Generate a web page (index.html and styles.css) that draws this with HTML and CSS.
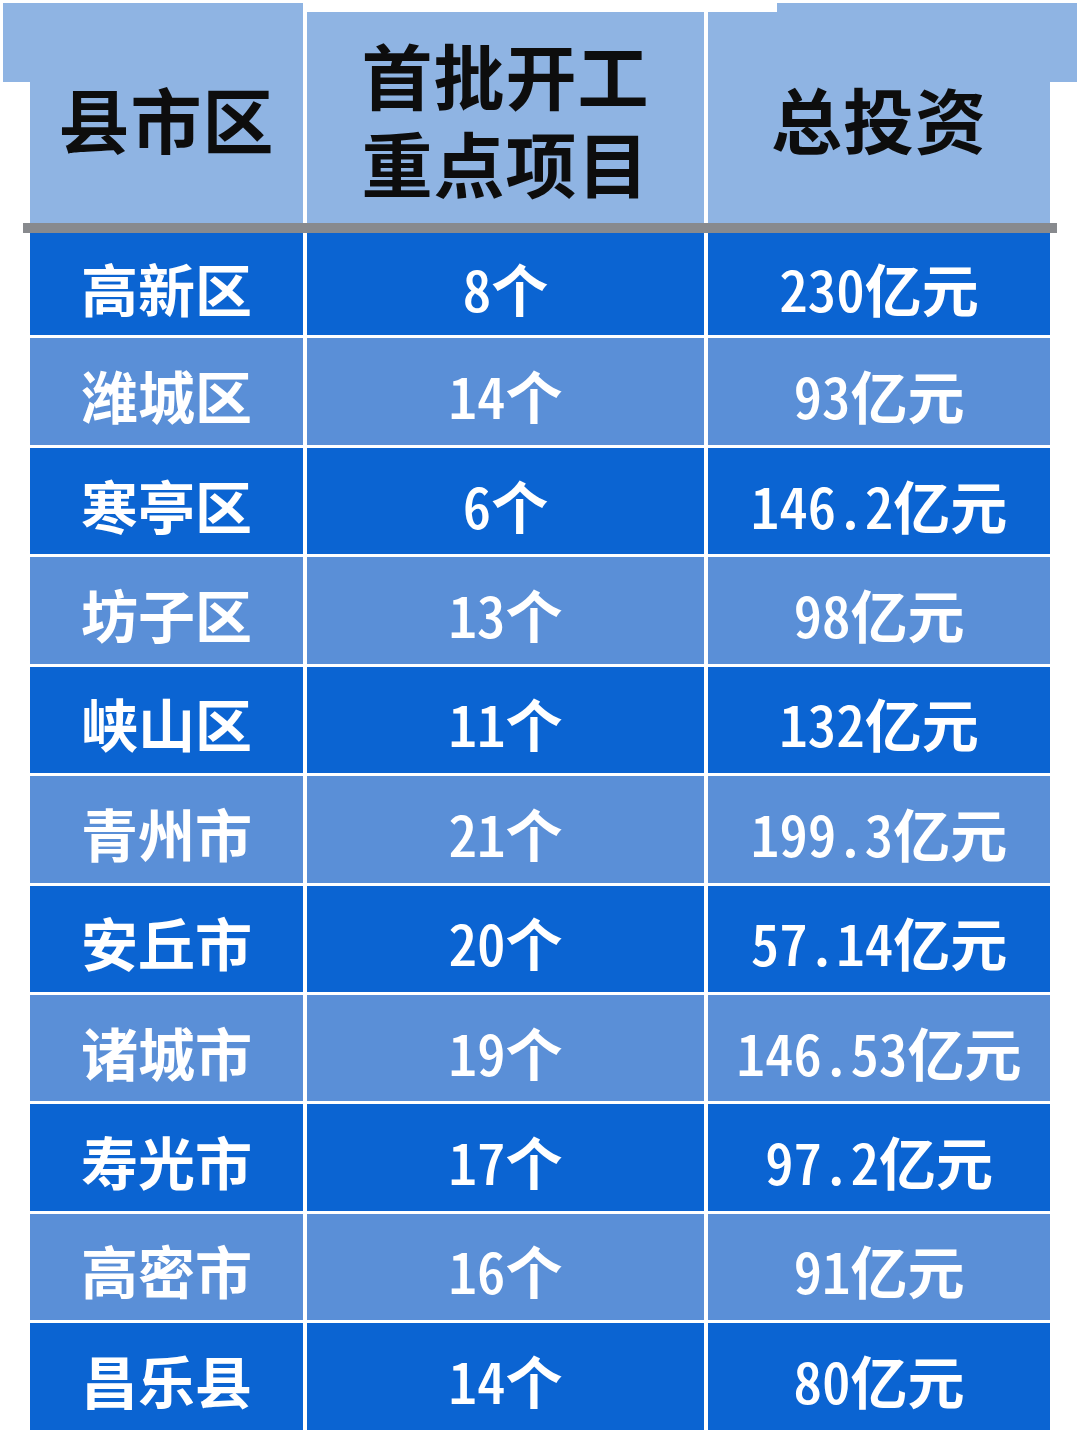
FILE: index.html
```html
<!DOCTYPE html>
<html lang="zh-CN">
<head>
<meta charset="utf-8">
<title>首批开工重点项目</title>
<link rel="stylesheet" href="styles.css">
</head>
<body>
<div class="page">
  <div class="tab tab-left"></div>
  <div class="tab tab-right"></div>
  <div class="head">
    <div class="hcell">县市区</div>
    <div class="hcell two"><span class="hl">首批开工</span><span class="hl">重点项目</span></div>
    <div class="hcell">总投资</div>
  </div>
  <div class="rule"></div>
  <div class="body">
    <div class="c d">高新区</div><div class="c d"><span class="n">8</span>个</div><div class="c d"><span class="n">230</span>亿元</div>
    <div class="c l">潍城区</div><div class="c l"><span class="n">14</span>个</div><div class="c l"><span class="n">93</span>亿元</div>
    <div class="c d">寒亭区</div><div class="c d"><span class="n">6</span>个</div><div class="c d"><span class="n">146.2</span>亿元</div>
    <div class="c l">坊子区</div><div class="c l"><span class="n">13</span>个</div><div class="c l"><span class="n">98</span>亿元</div>
    <div class="c d">峡山区</div><div class="c d"><span class="n">11</span>个</div><div class="c d"><span class="n">132</span>亿元</div>
    <div class="c l">青州市</div><div class="c l"><span class="n">21</span>个</div><div class="c l"><span class="n">199.3</span>亿元</div>
    <div class="c d">安丘市</div><div class="c d"><span class="n">20</span>个</div><div class="c d"><span class="n">57.14</span>亿元</div>
    <div class="c l">诸城市</div><div class="c l"><span class="n">19</span>个</div><div class="c l"><span class="n">146.53</span>亿元</div>
    <div class="c d">寿光市</div><div class="c d"><span class="n">17</span>个</div><div class="c d"><span class="n">97.2</span>亿元</div>
    <div class="c l">高密市</div><div class="c l"><span class="n">16</span>个</div><div class="c l"><span class="n">91</span>亿元</div>
    <div class="c d">昌乐县</div><div class="c d"><span class="n">14</span>个</div><div class="c d"><span class="n">80</span>亿元</div>
  </div>
</div>
</body>
</html>
```
FILE: styles.css
```css
* { box-sizing: border-box; }
html, body { margin: 0; padding: 0; background: #ffffff; }
body {
  width: 1080px;
  height: 1441px;
  overflow: hidden;
  font-family: "Noto Sans CJK SC", "Noto Sans", sans-serif;
}
.page {
  position: relative;
  width: 1080px;
  padding: 12px 30px 0 30px;
}
.tab {
  position: absolute;
  top: 3px;
  height: 79px;
  background: #8fb4e3;
  z-index: 0;
}
.tab-left { left: 3px; width: 300px; }
.tab-right { left: 777px; width: 300px; }
.head {
  position: relative;
  z-index: 1;
  display: grid;
  grid-template-columns: 273px 397px 342px;
  column-gap: 4px;
  height: 211px;
}
.hcell {
  background: #8fb4e3;
  color: #0d0d0d;
  font-weight: 700;
  font-size: 71px;
  line-height: 1;
  letter-spacing: 1px;
  display: flex;
  flex-direction: column;
  align-items: center;
  justify-content: center;
  text-align: center;
  padding-top: 0;
}
.hcell.two {
  gap: 17px;
  padding-top: 0;
}
.hl { display: block; }
.rule {
  height: 10px;
  margin: 0 -7px;
  background: #888a8e;
}
.body {
  display: grid;
  grid-template-columns: 273px 397px 342px;
  grid-template-rows: 102px 107px repeat(9, 106.4px);
  column-gap: 4px;
  row-gap: 3px;
  background: #ffffff;
}
.c {
  color: #ffffff;
  font-weight: 700;
  font-size: 57px;
  line-height: 1;
  display: flex;
  align-items: center;
  justify-content: center;
  padding-top: 6px;
  white-space: nowrap;
}
.d { background: #0b64d2; }
.l { background: #5a8fd7; }
.n {
  font-feature-settings: "hwid" 1;
  font-weight: 500;
}
```
